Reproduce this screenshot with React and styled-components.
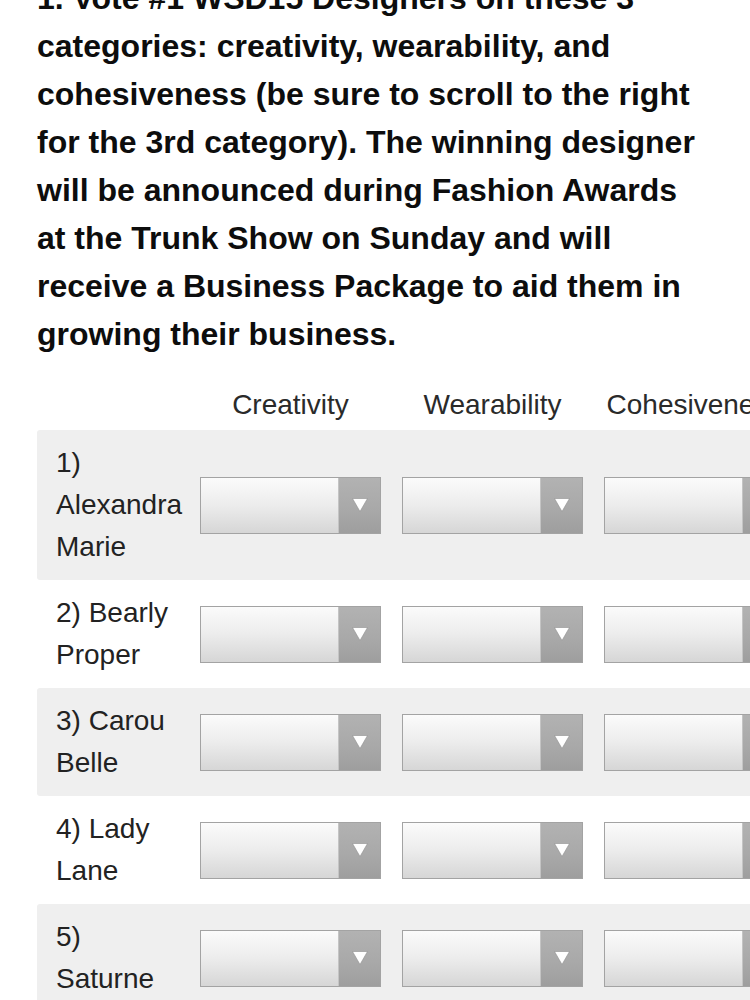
import React from "react";
import styled, { createGlobalStyle } from "styled-components";

const Global = createGlobalStyle`
  html, body { margin: 0; padding: 0; background: #ffffff; overflow: hidden; }
  body { font-family: "Liberation Sans", Arial, Helvetica, sans-serif; color: #111; }
  #root { width: 750px; height: 1000px; overflow: hidden; }
`;

const Page = styled.div`
  width: 750px;
  height: 1000px;
  overflow: hidden;
`;

const Question = styled.div`
  display: flex;
  margin-top: -26px;
`;

const Marker = styled.span`
  flex: 0 0 37px;
  box-sizing: border-box;
  padding-left: 9px;
  font-size: 18px;
  line-height: 48px;
  color: #222;
`;

const QuestionText = styled.p`
  margin: 0;
  width: 676px;
  font-size: 32px;
  font-weight: 700;
  line-height: 48px;
  color: #0d0d0d;
`;

const Table = styled.div`
  margin: 22px 0 0 37px;
  width: 860px;
  display: flex;
  flex-direction: column;
`;

const Grid = styled.div`
  display: grid;
  grid-template-columns: 123px 181px 181px 181px;
  column-gap: 21px;
  align-items: center;
  padding: ${(p) => (p.$header ? "0" : "12px")} 0 ${(p) => (p.$header ? "0" : "12px")} 19px;
  height: ${(p) => (p.$header ? "50px" : "auto")};
  background: ${(p) => (p.$shaded ? "#efefef" : "transparent")};
  border-radius: 3px;
`;

const HeaderCell = styled.div`
  text-align: center;
  font-size: 28px;
  line-height: 42px;
  color: #2a2a2a;
  white-space: nowrap;
`;

const Label = styled.div`
  font-size: 28px;
  line-height: 42px;
  color: #222;
`;

const SelectBox = styled.div`
  position: relative;
  height: 57px;
  box-sizing: border-box;
  border: 1px solid #a3a3a3;
  background: linear-gradient(to bottom, #fbfbfb 0%, #ececec 50%, #d6d6d6 100%);
  display: flex;
`;

const NativeSelect = styled.select`
  flex: 1;
  appearance: none;
  -webkit-appearance: none;
  border: none;
  background: transparent;
  font-family: inherit;
  font-size: 22px;
  padding: 0 10px;
  outline: none;
`;

const ArrowBox = styled.span`
  flex: 0 0 41px;
  display: flex;
  align-items: center;
  justify-content: center;
  background: linear-gradient(to bottom, #b2b2b2 0%, #a8a8a8 60%, #9e9e9e 100%);
  border-left: 1px solid #c4c4c4;
`;

const Arrow = () => (
  <svg width="18" height="16" viewBox="0 0 18 16">
    <path d="M1.5 1.5 L16.5 1.5 L9 14.5 Z" fill="#ffffff" stroke="#8f8f8f" strokeWidth="0.6" strokeLinejoin="round" />
  </svg>
);

const Select = () => (
  <SelectBox>
    <NativeSelect defaultValue="">
      <option value=""></option>
      <option>1</option>
      <option>2</option>
      <option>3</option>
      <option>4</option>
      <option>5</option>
    </NativeSelect>
    <ArrowBox>
      <Arrow />
    </ArrowBox>
  </SelectBox>
);

const designers = [
  "1) Alexandra Marie",
  "2) Bearly Proper",
  "3) Carou Belle",
  "4) Lady Lane",
  "5) Saturne",
];

export default function App() {
  return (
    <Page>
      <Global />
      <Question>
        <Marker>•</Marker>
        <QuestionText>
          1. Vote #1 WSD15 Designers on these 3 categories: creativity, wearability, and
          cohesiveness (be sure to scroll to the right for the 3rd category). The winning
          designer will be announced during Fashion Awards at the Trunk Show on Sunday and
          will receive a Business Package to aid them in growing their business.
        </QuestionText>
      </Question>
      <Table>
        <Grid $header>
          <span />
          <HeaderCell>Creativity</HeaderCell>
          <HeaderCell>Wearability</HeaderCell>
          <HeaderCell>Cohesiveness</HeaderCell>
        </Grid>
        {designers.map((d, i) => (
          <Grid key={d} $shaded={i % 2 === 0}>
            <Label>{d}</Label>
            <Select />
            <Select />
            <Select />
          </Grid>
        ))}
      </Table>
    </Page>
  );
}
